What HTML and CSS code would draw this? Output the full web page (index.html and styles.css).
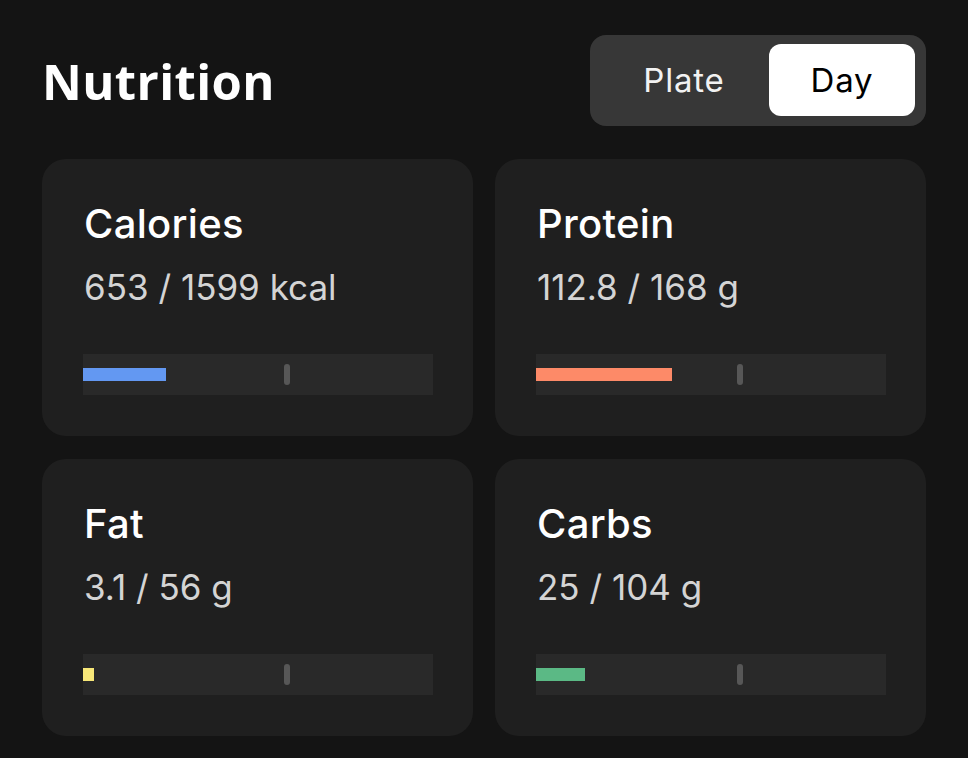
FILE: index.html
```html
<!DOCTYPE html>
<html>
<head>
<meta charset="utf-8">
<link rel="stylesheet" href="styles.css">
</head>
<body>
<div class="page">
  <header class="header">
    <h1 class="title">Nutrition</h1>
    <div class="toggle">
      <div class="seg">Plate</div>
      <div class="seg active">Day</div>
    </div>
  </header>
  <div class="grid">
    <div class="card">
      <div class="name">Calories</div>
      <div class="value">653 / 1599 kcal</div>
      <div class="track"><div class="fill blue" style="width:23.7%"></div><div class="mark"></div></div>
    </div>
    <div class="card">
      <div class="name">Protein</div>
      <div class="value">112.8 / 168 g</div>
      <div class="track"><div class="fill orange" style="width:38.9%"></div><div class="mark"></div></div>
    </div>
    <div class="card">
      <div class="name">Fat</div>
      <div class="value">3.1 / 56 g</div>
      <div class="track"><div class="fill yellow" style="width:3.2%"></div><div class="mark"></div></div>
    </div>
    <div class="card">
      <div class="name">Carbs</div>
      <div class="value">25 / 104 g</div>
      <div class="track"><div class="fill green" style="width:13.9%"></div><div class="mark"></div></div>
    </div>
  </div>
</div>
</body>
</html>
```
FILE: styles.css
```css
html, body {
  margin: 0;
  padding: 0;
  background: #141414;
  height: 100%;
}
body {
  font-family: Inter, "Noto Sans", sans-serif;
  color: #fff;
}
.page {
  padding: 35px 42px 0 42px;
}
.header {
  display: flex;
  justify-content: space-between;
  align-items: center;
  height: 91px;
}
.title {
  margin: 0;
  font-family: "Open Sans", sans-serif;
  font-weight: 700;
  font-size: 49px;
  letter-spacing: 0.4px;
  color: #fff;
}
.toggle {
  display: flex;
  background: #373737;
  border-radius: 16px;
  padding: 9px 11px 10px 9px;
  height: 72px;
}
.seg {
  display: flex;
  align-items: center;
  justify-content: center;
  font-size: 33px;
  letter-spacing: 0.8px;
  color: #f2f2f2;
  border-radius: 12px;
  width: 170px;
}
.seg.active {
  width: 146px;
  background: #fff;
  color: #000;
}
.grid {
  margin-top: 33px;
  display: grid;
  grid-template-columns: 431px 431px;
  grid-template-rows: 277px 277px;
  gap: 23px 22px;
}
.card {
  background: #1f1f1f;
  border-radius: 24px;
  padding: 37px 40px 0 42px;
}
.name {
  font-size: 40px;
  font-weight: 500;
  letter-spacing: 0.3px;
  line-height: 56px;
  color: #fff;
}
.value {
  font-size: 35px;
  font-weight: 400;
  line-height: 50px;
  color: #d4d4d4;
  margin-top: 10px;
}
.track {
  position: relative;
  margin-top: 42px;
  margin-left: -1px;
  height: 41px;
  background: #292929;
  display: flex;
  align-items: center;
}
.fill {
  height: 13px;
}
.blue { background: #6398f2; }
.orange { background: #fd8a68; }
.yellow { background: #f7e778; }
.green { background: #5bb985; }
.mark {
  position: absolute;
  left: 201px;
  top: 10px;
  width: 6px;
  height: 21px;
  border-radius: 3px;
  background: #575757;
}
```
